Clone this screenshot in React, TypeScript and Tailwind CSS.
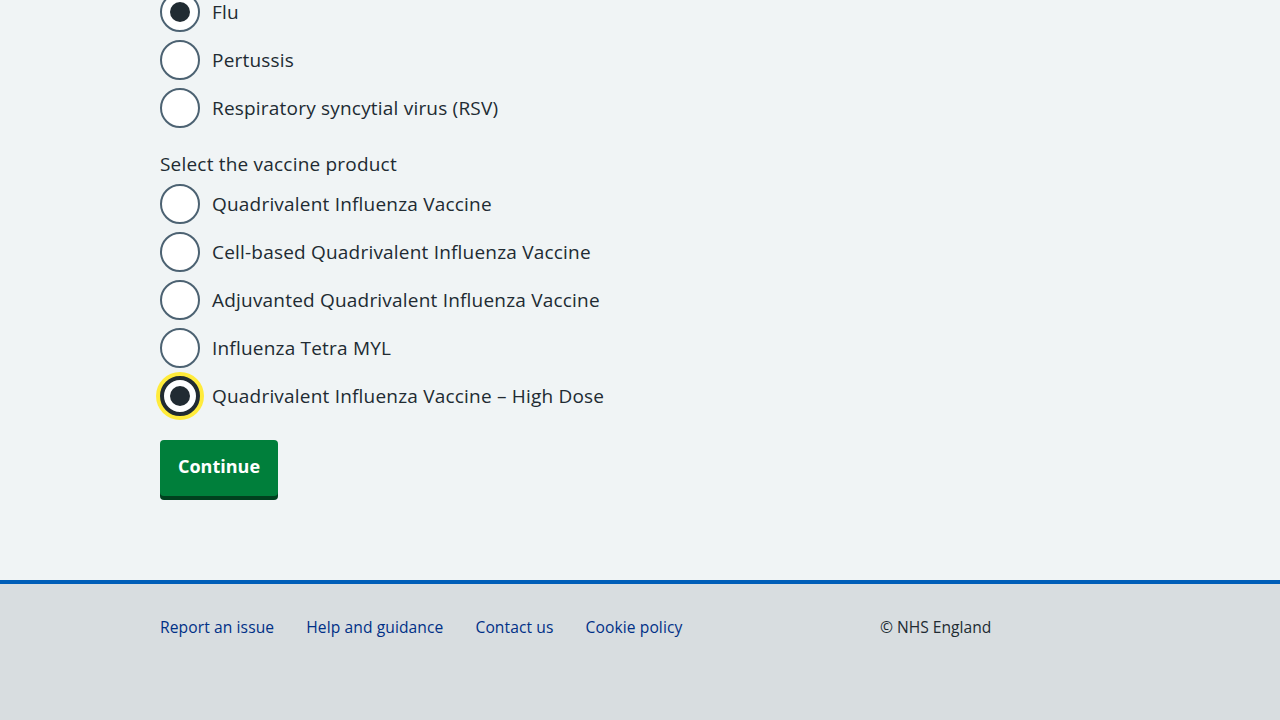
import React from "react";

const font = { fontFamily: '"Open Sans", "Noto Sans", Arial, sans-serif' };

function Radio({ label, checked, focused }: { label: string; checked?: boolean; focused?: boolean }) {
  return (
    <div className="flex items-center h-[40px] mb-[8px]">
      <div
        className={
          "w-[40px] h-[40px] rounded-full bg-white flex items-center justify-center shrink-0 " +
          (focused
            ? "border-[4px] border-[#212b32] shadow-[0_0_0_4px_#ffeb3b]"
            : "border-2 border-[#4c6272]")
        }
      >
        {checked && <div className="w-[20px] h-[20px] rounded-full bg-[#212b32]" />}
      </div>
      <span className="ml-[12px] text-[19px] leading-[28px] text-[#212b32] tracking-[0.2px]">{label}</span>
    </div>
  );
}

export default function App() {
  return (
    <div style={font} className="min-h-[720px] bg-[#f0f4f5] flex flex-col">
      <div className="px-[160px] -mt-[8px]">
        <Radio label="Flu" checked />
        <Radio label="Pertussis" />
        <Radio label="Respiratory syncytial virus (RSV)" />
        <div className="mt-[22px] mb-[6px] text-[19px] leading-[28px] text-[#212b32] tracking-[0.2px]">
          Select the vaccine product
        </div>
        <Radio label="Quadrivalent Influenza Vaccine" />
        <Radio label="Cell-based Quadrivalent Influenza Vaccine" />
        <Radio label="Adjuvanted Quadrivalent Influenza Vaccine" />
        <Radio label="Influenza Tetra MYL" />
        <Radio label="Quadrivalent Influenza Vaccine – High Dose" checked focused />
        <div className="mt-[24px]">
          <button className="h-[56px] px-[18px] pb-[3px] bg-[#007f3b] text-white text-[18px] font-bold rounded-[4px] shadow-[0_4px_0_#00401e]">
            Continue
          </button>
        </div>
      </div>
      <footer className="mt-[84px] border-t-[4px] border-[#005eb8] bg-[#d8dde0] flex-1">
        <div className="mx-[160px] pt-[31px] flex">
          <ul className="w-[720px] flex gap-[32px] text-[15.6px] leading-[24px] text-[#003087] tracking-[0.1px]">
            <li>Report an issue</li>
            <li>Help and guidance</li>
            <li>Contact us</li>
            <li>Cookie policy</li>
          </ul>
          <p className="text-[15.6px] leading-[24px] text-[#212b32]">© NHS England</p>
        </div>
      </footer>
    </div>
  );
}
